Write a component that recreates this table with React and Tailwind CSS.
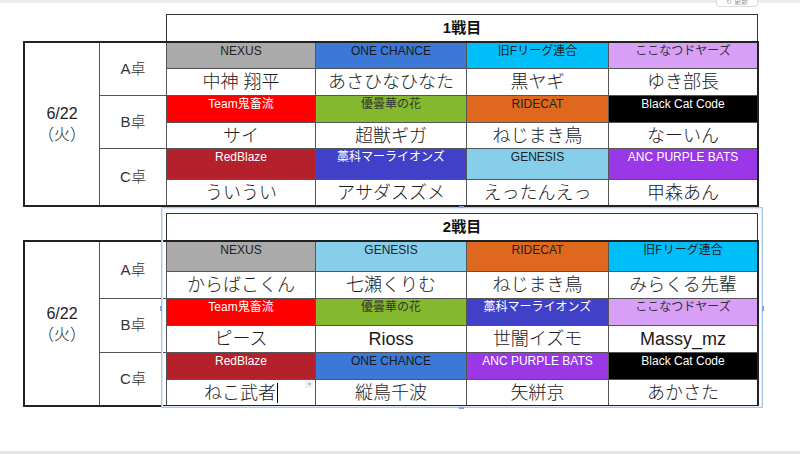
const C = {
  nexus: "bg-[#aaaaaa] text-[#222]",
  one: "bg-[#3c78d8] text-[#1a1a1a]",
  oldf: "bg-[#00bff8] text-[#222]",
  koko: "bg-[#d89ff6] text-[#333]",
  kichiku: "bg-[#ff0000] text-white",
  udon: "bg-[#83b82f] text-[#333]",
  ride: "bg-[#df681f] text-[#222]",
  black: "bg-black text-white",
  red: "bg-[#b4202c] text-white",
  wara: "bg-[#4040c8] text-white",
  gen: "bg-[#87ceea] text-[#222]",
  anc: "bg-[#9a37e6] text-white",
};

const rounds = [
  {
    title: "1戦目",
    rowsClass: "grid-rows-[26px_27px_27px_26px_31px_25px]",
    groups: [
      {
        label: "A卓",
        teams: [
          ["NEXUS", C.nexus],
          ["ONE CHANCE", C.one],
          ["旧Fリーグ連合", C.oldf],
          ["ここなつドヤーズ", C.koko],
        ],
        names: ["中神 翔平", "あさひなひなた", "黒ヤギ", "ゆき部長"],
      },
      {
        label: "B卓",
        teams: [
          ["Team鬼畜流", C.kichiku],
          ["優曇華の花", C.udon],
          ["RIDECAT", C.ride],
          ["Black Cat Code", C.black],
        ],
        names: ["サイ", "超獣ギガ", "ねじまき鳥", "なーいん"],
      },
      {
        label: "C卓",
        teams: [
          ["RedBlaze", C.red],
          ["藁科マーライオンズ", C.wara],
          ["GENESIS", C.gen],
          ["ANC PURPLE BATS", C.anc],
        ],
        names: ["ういうい", "アサダスズメ", "えったんえっ", "甲森あん"],
      },
    ],
  },
  {
    title: "2戦目",
    rowsClass: "grid-rows-[30px_27px_27px_27px_27px_25px]",
    groups: [
      {
        label: "A卓",
        teams: [
          ["NEXUS", C.nexus],
          ["GENESIS", C.gen],
          ["RIDECAT", C.ride],
          ["旧Fリーグ連合", C.oldf],
        ],
        names: ["からばこくん", "七瀬くりむ", "ねじまき鳥", "みらくる先輩"],
      },
      {
        label: "B卓",
        teams: [
          ["Team鬼畜流", C.kichiku],
          ["優曇華の花", C.udon],
          ["藁科マーライオンズ", C.wara],
          ["ここなつドヤーズ", C.koko],
        ],
        names: ["ピース", "Rioss", "世闇イズモ", "Massy_mz"],
      },
      {
        label: "C卓",
        teams: [
          ["RedBlaze", C.red],
          ["ONE CHANCE", C.one],
          ["ANC PURPLE BATS", C.anc],
          ["Black Cat Code", C.black],
        ],
        names: ["ねこ武者", "縦鳥千波", "矢絣京", "あかさた"],
        cursor: true,
      },
    ],
  },
];

const Round = ({ round, className }) => {
  return (
    <div className={className}>
      <div className="ml-[143px] flex h-[27px] w-[592px] items-center justify-center border border-b-0 border-[#333] text-[15px] font-bold text-[#111]">
        {round.title}
      </div>
      <div
        className={`grid w-[736px] grid-cols-[75px_67px_149px_151px_142px_148px] border-2 border-[#222] ${round.rowsClass}`}
      >
        <div className="row-span-6 flex flex-col items-center justify-center border-r border-[#555] text-[16px] font-light leading-[21px] text-[#222]">
          <span>6/22</span>
          <span>（火）</span>
        </div>
        {round.groups.map((g, gi) => {
          const last = gi === round.groups.length - 1;
          return [
            <div
              key={`l${gi}`}
              className={`row-span-2 flex items-center justify-center border-r border-[#555] text-[15px] font-light text-[#333] ${
                last ? "" : "border-b"
              }`}
            >
              {g.label}
            </div>,
            ...g.teams.map(([name, color], ti) => (
              <div
                key={`t${gi}${ti}`}
                className={`border-b border-[#555] pt-[1px] text-center text-[12px] leading-[14px] ${color} ${
                  ti < 3 ? "border-r" : ""
                }`}
              >
                {name}
              </div>
            )),
            ...g.names.map((name, ni) => (
              <div
                key={`n${gi}${ni}`}
                className={`relative flex items-center justify-center border-[#555] bg-white text-[18px] font-light leading-none text-[#1a1a1a] ${
                  ni < 3 ? "border-r" : ""
                } ${last ? "" : "border-b"}`}
              >
                <span>{name}</span>
                {g.cursor && ni === 0 && (
                  <>
                    <span className="ml-[1px] h-[20px] w-[1px] bg-black" />
                    <span className="absolute right-[2px] top-[1px] flex h-[7px] w-[8px] items-start justify-center bg-[#f3f3f3] text-[6px] leading-[6px] text-[#aaa]">
                      ▾
                    </span>
                  </>
                )}
              </div>
            )),
          ];
        })}
      </div>
    </div>
  );
};

export default function App() {
  return (
    <div className="relative h-[454px] w-[800px] overflow-hidden bg-white font-['Liberation_Sans','Noto_Sans_CJK_JP',sans-serif]">
      <div className="h-[3px] bg-[#ececec]" />
      <div className="absolute left-[716px] top-[-6px] flex h-[13px] w-[42px] items-end justify-center rounded-[3px] border border-[#ddd] bg-white pb-[1px] text-[7px] leading-[7px] text-[#999]">
        ↻ 更新
      </div>

      <div className="pl-[23px] pt-[11px]">
        <Round round={rounds[0]} />
        <Round round={rounds[1]} className="mt-[6px]" />
      </div>

      {/* selection frame around round 2 */}
      <div className="pointer-events-none absolute left-[161px] top-[207px] h-[201px] w-[602px] border border-[#a9c5f1]">
        <div className="h-full w-full border border-[#dde8fa]" />
        <div className="absolute left-[297px] top-[-2px] h-[2px] w-[5px] bg-[#7fa3dc]" />
        <div className="absolute bottom-[-2px] left-[297px] h-[2px] w-[5px] bg-[#7fa3dc]" />
        <div className="absolute left-[-2px] top-[98px] h-[5px] w-[2px] bg-[#7fa3dc]" />
        <div className="absolute right-[-2px] top-[98px] h-[5px] w-[2px] bg-[#7fa3dc]" />
      </div>

      <div className="absolute bottom-0 left-0 h-[3px] w-full bg-[#e6e6e6]" />
    </div>
  );
}
